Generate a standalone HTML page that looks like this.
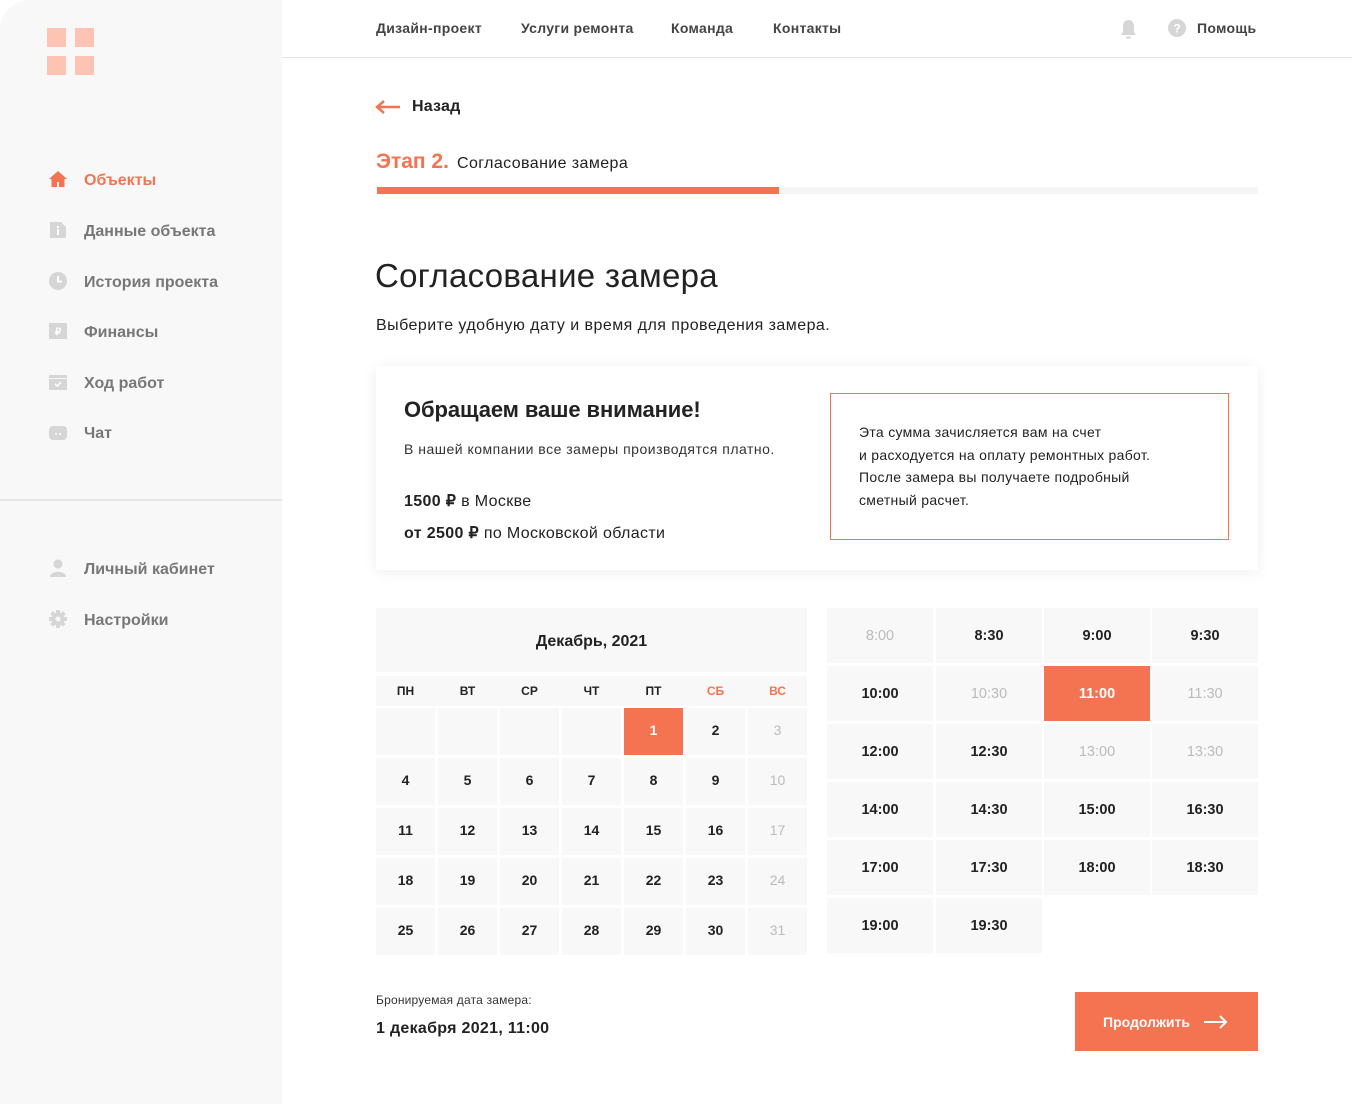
<!DOCTYPE html>
<html><head><meta charset="utf-8"><style>
*{margin:0;padding:0;box-sizing:border-box}
body{width:1352px;height:1104px;background:#fff;font-family:"Liberation Sans",sans-serif;color:#222;position:relative;overflow:hidden}
.a{position:absolute;white-space:nowrap}
.side{position:absolute;left:0;top:0;width:282px;height:1104px;background:#f8f8f8;border-top-left-radius:30px}
.sq{position:absolute;width:19px;height:19px;background:#fec3b2}
.nav{position:absolute;left:84px;font-size:16px;color:#777;font-weight:bold;line-height:20px}
.ic{position:absolute;left:49px;width:18px;height:18px}
.top{position:absolute;top:20px;font-size:14px;color:#444;font-weight:bold;letter-spacing:.3px}
.c{position:absolute;display:flex;align-items:center;justify-content:center;background:#f8f8f8;font-weight:bold;font-size:14px;color:#222}
.g{color:#bbb;font-weight:normal}
.sel{background:#f47350;color:#fff}
</style></head><body>
<div class="side"></div>
<div class="sq" style="left:47px;top:28px"></div><div class="sq" style="left:75px;top:28px"></div>
<div class="sq" style="left:47px;top:56px"></div><div class="sq" style="left:75px;top:56px"></div>

<svg class="ic" style="top:170px" viewBox="0 0 18 18"><path d="M9 1 L18 9 H15.5 V17 H10 V12 H8 V17 H2.5 V9 H0 Z" fill="#f47350"/></svg>
<div class="nav" style="top:171px;color:#f47350">Объекты</div>
<svg class="ic" style="top:221px" viewBox="0 0 18 18"><path d="M1 1 H12 L17 6 V17 H1 Z" fill="#d6d6d6"/><rect x="8" y="8" width="2" height="6" fill="#fff"/><rect x="8" y="5" width="2" height="2" fill="#fff"/></svg>
<div class="nav" style="top:222px">Данные объекта</div>
<svg class="ic" style="top:272px" viewBox="0 0 18 18"><circle cx="9" cy="9" r="9" fill="#d6d6d6"/><path d="M9 4 V9.5 H13" stroke="#fff" stroke-width="2" fill="none"/></svg>
<div class="nav" style="top:273px">История проекта</div>
<svg class="ic" style="top:322px" viewBox="0 0 18 18"><rect x="0" y="1" width="18" height="16" fill="#d6d6d6"/><text x="6" y="13" font-size="10" fill="#fff" font-family="Liberation Sans" font-weight="bold">₽</text></svg>
<div class="nav" style="top:323px">Финансы</div>
<svg class="ic" style="top:373px" viewBox="0 0 18 18"><rect x="0" y="2" width="18" height="3" fill="#d6d6d6"/><rect x="0" y="6" width="18" height="11" fill="#d6d6d6"/><path d="M6 11 L8.5 13 L12 9" stroke="#fff" stroke-width="1.5" fill="none"/></svg>
<div class="nav" style="top:374px">Ход работ</div>
<svg class="ic" style="top:424px" viewBox="0 0 18 18"><rect x="0" y="2" width="18" height="14" rx="4" fill="#d6d6d6"/><circle cx="7" cy="10" r="1" fill="#fff"/><circle cx="11" cy="10" r="1" fill="#fff"/></svg>
<div class="nav" style="top:424px">Чат</div>
<div class="a" style="left:0;top:499px;width:282px;height:2px;background:#e6e6e6"></div>
<svg class="ic" style="top:559px" viewBox="0 0 18 18"><circle cx="9" cy="5" r="4.5" fill="#d6d6d6"/><path d="M1 18 C1 11 17 11 17 18 Z" fill="#d6d6d6"/></svg>
<div class="nav" style="top:560px">Личный кабинет</div>
<svg class="ic" style="top:610px" viewBox="0 0 18 18"><g fill="#d6d6d6"><circle cx="9" cy="9" r="6.5"/><rect x="7" y="0" width="4" height="18"/><rect x="0" y="7" width="18" height="4"/><rect x="7" y="0" width="4" height="18" transform="rotate(45 9 9)"/><rect x="7" y="0" width="4" height="18" transform="rotate(-45 9 9)"/></g><circle cx="9" cy="9" r="2.5" fill="#f8f8f8"/></svg>
<div class="nav" style="top:611px">Настройки</div>

<div class="top" style="left:376px">Дизайн-проект</div>
<div class="top" style="left:521px">Услуги ремонта</div>
<div class="top" style="left:671px">Команда</div>
<div class="top" style="left:773px">Контакты</div>
<svg class="a" style="left:1119px;top:19px" width="19" height="20" viewBox="0 0 19 20"><path d="M9.5 1 C5 1 4 5 4 8 V13 L2 16 H17 L15 13 V8 C15 5 14 1 9.5 1Z" fill="#d6d6d6"/><rect x="7" y="17.5" width="5" height="2" rx="1" fill="#d6d6d6"/></svg>
<svg class="a" style="left:1168px;top:19px" width="18" height="18" viewBox="0 0 18 18"><circle cx="9" cy="9" r="9" fill="#d6d6d6"/><text x="5.5" y="13.5" font-size="12" font-weight="bold" fill="#fff" font-family="Liberation Sans">?</text></svg>
<div class="top" style="left:1197px">Помощь</div>
<div class="a" style="left:282px;top:57px;width:1070px;height:1px;background:#e2e2e2"></div>

<svg class="a" style="left:375px;top:99px" width="26" height="16" viewBox="0 0 26 16"><path d="M25 8 H3 M9 2 L2 8 L9 14" stroke="#f47350" stroke-width="2.5" fill="none"/></svg>
<div class="a" style="left:412px;top:98px;font-size:16px;font-weight:bold;letter-spacing:.2px">Назад</div>
<div class="a" style="left:376px;top:150px;font-size:21px;font-weight:bold;color:#f47350">Этап 2.</div>
<div class="a" style="left:457px;top:155px;font-size:16px;letter-spacing:.4px">Согласование замера</div>
<div class="a" style="left:377px;top:187px;width:881px;height:7px;background:#f5f5f5"></div>
<div class="a" style="left:377px;top:187px;width:402px;height:7px;background:#f47350"></div>

<div class="a" style="left:375px;top:257px;font-size:33px;letter-spacing:.3px">Согласование замера</div>
<div class="a" style="left:376px;top:317px;font-size:16px;letter-spacing:.45px">Выберите удобную дату и время для проведения замера.</div>

<div class="a" style="left:376px;top:366px;width:882px;height:204px;background:#fff;box-shadow:0 2px 14px rgba(0,0,0,.07)"></div>
<div class="a" style="left:404px;top:397px;font-size:22px;font-weight:bold;letter-spacing:-.1px;color:#222">Обращаем ваше внимание!</div>
<div class="a" style="left:404px;top:441px;font-size:14px;letter-spacing:.5px;color:#333">В нашей компании все замеры производятся платно.</div>
<div class="a" style="left:404px;top:491px;font-size:16px;letter-spacing:.35px"><b>1500 ₽</b> в Москве</div>
<div class="a" style="left:404px;top:523px;font-size:16px;letter-spacing:.35px"><b>от 2500 ₽</b> по Московской области</div>
<div class="a" style="left:830px;top:393px;width:399px;height:147px;border:1px solid #f47350"></div>
<div class="a" style="left:859px;top:421px;font-size:14px;line-height:22.7px;letter-spacing:.3px;color:#222">Эта сумма зачисляется вам на счет<br>и расходуется на оплату ремонтных работ.<br>После замера вы получаете подробный<br>сметный расчет.</div>

<div class="c" style="left:376px;top:608px;width:431px;height:64px;font-size:16px;padding-top:4px">Декабрь, 2021</div>
<div class="c" style="left:376px;top:676px;width:431px;height:30px"></div>
<div id="cal"></div>
<div id="tm"></div>

<div class="a" style="left:376px;top:993px;font-size:12px;color:#333;letter-spacing:.2px">Бронируемая дата замера:</div>
<div class="a" style="left:376px;top:1020px;font-size:16px;font-weight:bold;letter-spacing:.3px">1 декабря 2021, 11:00</div>
<div class="a" style="left:1075px;top:992px;width:183px;height:59px;background:#f47350;color:#fff;font-size:14px;font-weight:bold;display:flex;align-items:center;padding-left:28px">Продолжить<svg style="margin-left:14px" width="24" height="14" viewBox="0 0 24 14"><path d="M0 7 H22 M16 1 L22 7 L16 13" stroke="#fff" stroke-width="2" fill="none"/></svg></div>

<script>
var cx=[376,438,500,562,624,686,748],cw=59;
var h='';var wd=['ПН','ВТ','СР','ЧТ','ПТ','СБ','ВС'];
wd.forEach(function(d,i){h+='<div class="c" style="left:'+cx[i]+'px;top:676px;width:'+cw+'px;height:30px;font-size:12px;background:none;'+(i>4?'color:#f47350':'')+'">'+d+'</div>'});
var day=1;
for(var r=0;r<5;r++){for(var i=0;i<7;i++){var t='';var cls='c';
 if(r==0&&i<4){t=''}else{t=day;if(i==6)cls+=' g';if(day==1)cls+=' sel';day++;}
 h+='<div class="'+cls+'" style="left:'+cx[i]+'px;top:'+(708+r*50)+'px;width:'+cw+'px;height:47px;padding-bottom:3px">'+t+'</div>';}}
document.getElementById('cal').innerHTML=h;
var tx=[827,936,1044,1152],tw=106;
var T=[['8:00g','8:30','9:00','9:30'],['10:00','10:30g','11:00s','11:30g'],['12:00','12:30','13:00g','13:30g'],['14:00','14:30','15:00','16:30'],['17:00','17:30','18:00','18:30'],['19:00','19:30']];
h='';T.forEach(function(row,r){row.forEach(function(v,i){var cls='c';if(v.slice(-1)=='g'){cls+=' g';v=v.slice(0,-1)}if(v.slice(-1)=='s'){cls+=' sel';v=v.slice(0,-1)}
 h+='<div class="'+cls+'" style="left:'+tx[i]+'px;top:'+(608+r*58)+'px;width:'+tw+'px;height:55px;font-size:14.5px">'+v+'</div>'})});
document.getElementById('tm').innerHTML=h;
</script>
</body></html>
